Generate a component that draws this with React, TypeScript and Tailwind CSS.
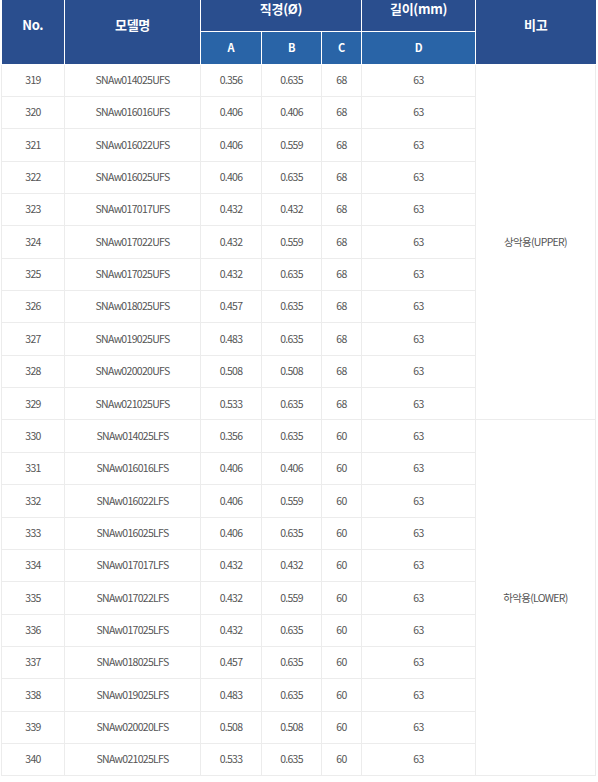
import React from "react"

type Row = [number, string, string, string, string]

const upper: Row[] = [
  [319, "SNAw014025UFS", "0.356", "0.635", "68"],
  [320, "SNAw016016UFS", "0.406", "0.406", "68"],
  [321, "SNAw016022UFS", "0.406", "0.559", "68"],
  [322, "SNAw016025UFS", "0.406", "0.635", "68"],
  [323, "SNAw017017UFS", "0.432", "0.432", "68"],
  [324, "SNAw017022UFS", "0.432", "0.559", "68"],
  [325, "SNAw017025UFS", "0.432", "0.635", "68"],
  [326, "SNAw018025UFS", "0.457", "0.635", "68"],
  [327, "SNAw019025UFS", "0.483", "0.635", "68"],
  [328, "SNAw020020UFS", "0.508", "0.508", "68"],
  [329, "SNAw021025UFS", "0.533", "0.635", "68"],
]

const lower: Row[] = [
  [330, "SNAw014025LFS", "0.356", "0.635", "60"],
  [331, "SNAw016016LFS", "0.406", "0.406", "60"],
  [332, "SNAw016022LFS", "0.406", "0.559", "60"],
  [333, "SNAw016025LFS", "0.406", "0.635", "60"],
  [334, "SNAw017017LFS", "0.432", "0.432", "60"],
  [335, "SNAw017022LFS", "0.432", "0.559", "60"],
  [336, "SNAw017025LFS", "0.432", "0.635", "60"],
  [337, "SNAw018025LFS", "0.457", "0.635", "60"],
  [338, "SNAw019025LFS", "0.483", "0.635", "60"],
  [339, "SNAw020020LFS", "0.508", "0.508", "60"],
  [340, "SNAw021025LFS", "0.533", "0.635", "60"],
]

const td = "border border-[#ececec] text-center align-middle p-0"
const th = "border border-white text-center align-middle p-0 font-bold text-white tracking-[-0.3px]"

function Group({ rows, note }: { rows: Row[]; note: string }) {
  return (
    <>
      {rows.map((r, i) => (
        <tr key={r[0]} className="h-[32.36px]">
          <td className={td}>{r[0]}</td>
          <td className={td}>{r[1]}</td>
          <td className={td}>{r[2]}</td>
          <td className={td}>{r[3]}</td>
          <td className={td}>{r[4]}</td>
          <td className={td}>63</td>
          {i === 0 && (
            <td className={td} rowSpan={rows.length}>
              {note}
            </td>
          )}
        </tr>
      ))}
    </>
  )
}

export default function App() {
  return (
    <div
      className="bg-white w-[598px] h-[782px] overflow-hidden pl-px"
      style={{ fontFamily: '"Noto Sans CJK KR", "Noto Sans", sans-serif' }}
    >
      <table className="border-collapse table-fixed w-[595px] text-[10.5px] tracking-[-0.7px] text-[#555] leading-none -mt-px">
        <colgroup>
          <col className="w-[63px]" />
          <col className="w-[136px]" />
          <col className="w-[61px]" />
          <col className="w-[60px]" />
          <col className="w-[40px]" />
          <col className="w-[114px]" />
          <col />
        </colgroup>
        <thead>
          <tr className="h-[32px]">
            <th rowSpan={2} className={`${th} bg-[#2a4e8e] text-[13px] border-t-0 border-l-0 pb-[14px]`}>
              No.
            </th>
            <th rowSpan={2} className={`${th} bg-[#2a4e8e] text-[13px] border-t-0 pb-[14px]`}>
              모델명
            </th>
            <th colSpan={3} className={`${th} bg-[#2a4e8e] text-[13px] border-t-0 pb-[12px]`}>
              직경(Ø)
            </th>
            <th className={`${th} bg-[#2a4e8e] text-[13px] border-t-0 pb-[12px]`}>길이(mm)</th>
            <th rowSpan={2} className={`${th} bg-[#2a4e8e] text-[13px] border-t-0 border-r-0 pb-[14px]`}>
              비고
            </th>
          </tr>
          <tr className="h-[33px]">
            <th className={`${th} bg-[#2964a7] text-[11px]`}>A</th>
            <th className={`${th} bg-[#2964a7] text-[11px]`}>B</th>
            <th className={`${th} bg-[#2964a7] text-[11px]`}>C</th>
            <th className={`${th} bg-[#2964a7] text-[11px]`}>D</th>
          </tr>
        </thead>
        <tbody>
          <Group rows={upper} note="상악용(UPPER)" />
          <Group rows={lower} note="하악용(LOWER)" />
        </tbody>
      </table>
    </div>
  )
}
